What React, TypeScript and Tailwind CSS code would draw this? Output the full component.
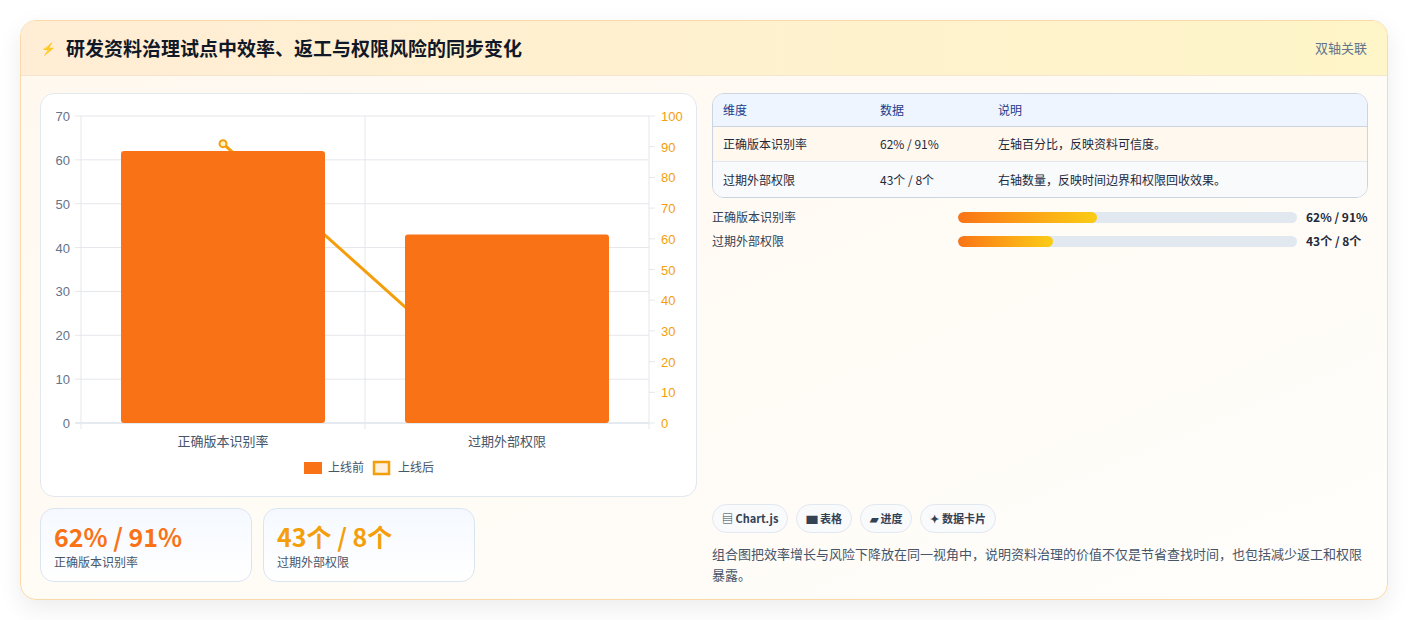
import React from "react";

const F = '"Noto Sans CJK SC", "Noto Sans", sans-serif';

function Chart() {
  const ox = 40, oy = 93;
  const X0 = 80 - ox, X1 = 648 - ox, Y0 = 115 - oy, Y1 = 422 - oy;
  const ly = (v: number) => Y1 - (v / 70) * (Y1 - Y0);
  const ry = (v: number) => Y1 - (v / 100) * (Y1 - Y0);
  const mid = 364 - ox;
  const p1 = { x: 222 - ox, y: ry(91) };
  const p2 = { x: 506 - ox, y: ry(8) };
  return (
    <svg width="656" height="403" className="block" style={{ fontFamily: '"Liberation Sans", sans-serif' }}>
      {[0, 10, 20, 30, 40, 50, 60, 70].map((v) => (
        <g key={v}>
          <line x1={X0 - 6} x2={X1} y1={ly(v)} y2={ly(v)} stroke={v === 0 ? "#cbd5e1" : "#e5e7eb"} />
          <text x={X0 - 11} y={ly(v) + 5} textAnchor="end" fontSize="13" fill="#64748b">{v}</text>
        </g>
      ))}
      {[0, 10, 20, 30, 40, 50, 60, 70, 80, 90, 100].map((v) => (
        <g key={v}>
          <line x1={X1} x2={X1 + 6} y1={ry(v)} y2={ry(v)} stroke="#e5e7eb" />
          <text x={X1 + 12} y={ry(v) + 5} fontSize="13" fill="#f59e0b">{v}</text>
        </g>
      ))}
      <line x1={X0} x2={X0} y1={Y0} y2={Y1 + 6} stroke="#e5e7eb" />
      <line x1={mid} x2={mid} y1={Y0} y2={Y1 + 6} stroke="#e5e7eb" />
      <line x1={X1} x2={X1} y1={Y0} y2={Y1 + 6} stroke="#e5e7eb" />
      <line x1={p1.x} y1={p1.y} x2={p2.x} y2={p2.y} stroke="#f59e0b" strokeWidth="3" />
      <circle cx={p1.x} cy={p1.y} r="3.5" fill="#fef3c7" stroke="#f59e0b" strokeWidth="2" />
      <rect x={120 - ox} y={ly(62)} width="204" height={Y1 - ly(62)} rx="3" fill="#f97316" />
      <rect x={404 - ox} y={ly(43)} width="204" height={Y1 - ly(43)} rx="3" fill="#f97316" />
      <text x={222 - ox} y={445 - oy} textAnchor="middle" fontSize="13" fill="#475569" fontFamily={F}>正确版本识别率</text>
      <text x={506 - ox} y={445 - oy} textAnchor="middle" fontSize="13" fill="#475569" fontFamily={F}>过期外部权限</text>
      <rect x={303 - ox} y={461 - oy} width="18" height="12" fill="#f97316" />
      <text x={327 - ox} y={471 - oy} fontSize="12" fill="#475569" fontFamily={F}>上线前</text>
      <rect x={373 - ox} y={461 - oy} width="15" height="12" fill="#fdf0dc" stroke="#f59e0b" strokeWidth="2.5" />
      <text x={397 - ox} y={471 - oy} fontSize="12" fill="#475569" fontFamily={F}>上线后</text>
    </svg>
  );
}

function Bar({ label, pct, value }: { label: string; pct: string; value: string }) {
  return (
    <div className="flex items-center h-[24px] text-[12px]">
      <div className="w-[246px] text-[#334155]">{label}</div>
      <div className="w-[339px] h-[11px] rounded-full bg-[#e2e8f0] overflow-hidden">
        <div className={`h-full rounded-full bg-gradient-to-r from-[#f97316] to-[#facc15] ${pct}`} />
      </div>
      <div className="ml-[9px] font-bold text-[#1e293b]">{value}</div>
    </div>
  );
}

export default function App() {
  return (
    <div className="w-[1408px] h-[620px] bg-white pt-[20px] pl-[20px]" style={{ fontFamily: F }}>
      <div className="w-[1368px] h-[580px] rounded-[16px] border border-[#fcd9a8] overflow-hidden bg-gradient-to-br from-[#fff8ef] to-[#fffefb] shadow-[0_8px_24px_rgba(0,0,0,0.08)] flex flex-col">
        <div className="h-[55px] flex items-center justify-between px-[20px] bg-gradient-to-r from-[#ffedd5] to-[#fef5c8] border-b border-[#f3e6cc]">
          <div className="flex items-center gap-[10px]">
            <span className="text-[12px] text-[#3b82f6]">⚡</span>
            <span className="text-[19px] font-bold text-[#111827]">研发资料治理试点中效率、返工与权限风险的同步变化</span>
          </div>
          <span className="text-[13px] text-[#64748b]">双轴关联</span>
        </div>
        <div className="flex gap-[15px] px-[19px] pt-[17px]">
          <div className="w-[657px] flex flex-col gap-[11px]">
            <div className="h-[404px] rounded-[14px] border border-[#e2e8f0] bg-white">
              <Chart />
            </div>
            <div className="flex gap-[11px]">
              <div className="w-[212px] h-[74px] rounded-[14px] border border-[#dbe5f1] bg-gradient-to-b from-[#f5f9ff] to-white px-[13px] pt-[10px]">
                <div className="text-[25px] font-bold text-[#f97316] leading-[34px]">62% / 91%</div>
                <div className="text-[12px] text-[#475569]">正确版本识别率</div>
              </div>
              <div className="w-[212px] h-[74px] rounded-[14px] border border-[#dbe5f1] bg-gradient-to-b from-[#f5f9ff] to-white px-[13px] pt-[10px]">
                <div className="text-[25px] font-bold text-[#f59e0b] leading-[34px]">43个 / 8个</div>
                <div className="text-[12px] text-[#475569]">过期外部权限</div>
              </div>
            </div>
          </div>
          <div className="w-[658px] flex flex-col">
            <div className="rounded-[12px] border border-[#cbd5e1] overflow-hidden text-[12px] text-[#1e293b]">
              <div className="flex h-[33px] items-center bg-[#eef5ff] border-b border-[#cbd5e1] text-[#1e3a8a] px-[10px]">
                <div className="w-[157px]">维度</div><div className="w-[118px]">数据</div><div>说明</div>
              </div>
              <div className="flex h-[35px] items-center bg-[#fff8ef] border-b border-[#e2e8f0] px-[10px]">
                <div className="w-[157px]">正确版本识别率</div><div className="w-[118px]">62% / 91%</div><div>左轴百分比，反映资料可信度。</div>
              </div>
              <div className="flex h-[35px] items-center bg-[#f8fafc] px-[10px]">
                <div className="w-[157px]">过期外部权限</div><div className="w-[118px]">43个 / 8个</div><div>右轴数量，反映时间边界和权限回收效果。</div>
              </div>
            </div>
            <div className="mt-[7px] flex flex-col">
              <Bar label="正确版本识别率" pct="w-[41%]" value="62% / 91%" />
              <Bar label="过期外部权限" pct="w-[28%]" value="43个 / 8个" />
            </div>
            <div className="mt-[251px] flex gap-[8px] text-[11px] font-bold text-[#334155]">
              {["▤ Chart.js", "▆ 表格", "▰ 进度", "✦ 数据卡片"].map((t) => (
                <span key={t} className="h-[29px] px-[9px] flex items-center rounded-full border border-[#e2e8f0] bg-[#f8fafc]">{t}</span>
              ))}
            </div>
            <p className="mt-[10px] text-[13px] leading-[21px] text-[#475569]">
              组合图把效率增长与风险下降放在同一视角中，说明资料治理的价值不仅是节省查找时间，也包括减少返工和权限暴露。
            </p>
          </div>
        </div>
      </div>
    </div>
  );
}
